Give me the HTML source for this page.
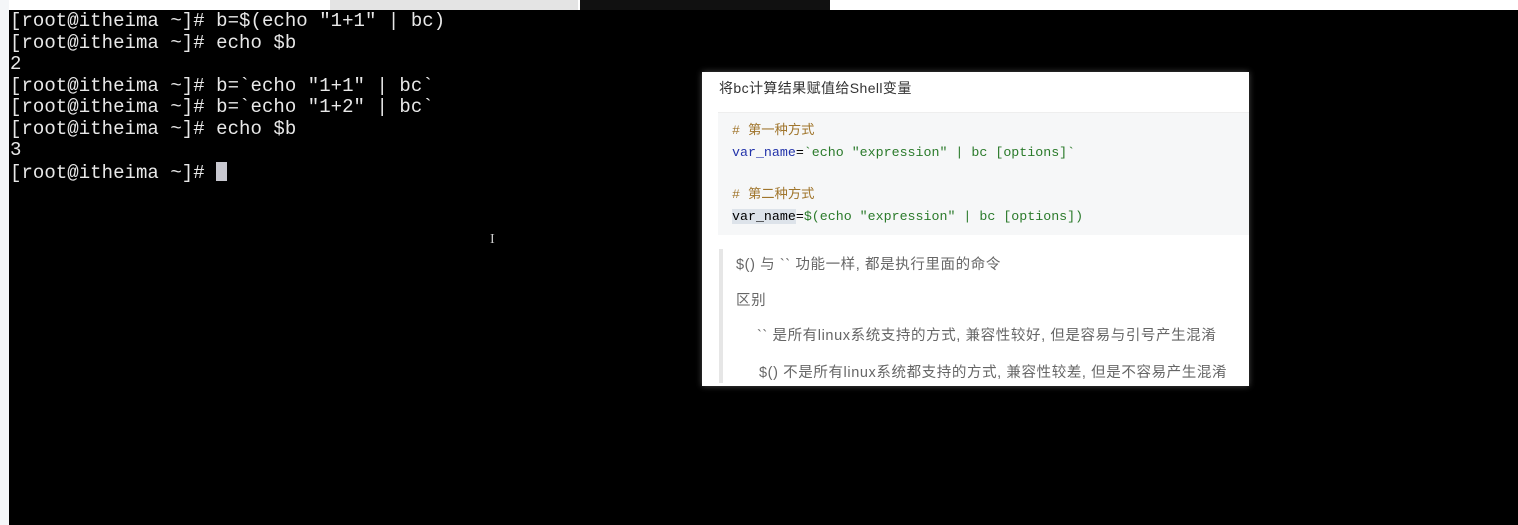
<!DOCTYPE html>
<html><head><meta charset="utf-8"><style>
body{margin:0;width:1518px;height:525px;background:#000;position:relative;overflow:hidden;font-family:"Liberation Sans","Noto Sans CJK SC",sans-serif}
.top{position:absolute;left:0;top:0;width:1518px;height:10px;background:#fff}
.tab1{position:absolute;left:330px;top:0;width:248px;height:10px;background:#e4e4e4}
.tab2{position:absolute;left:580px;top:0;width:250px;height:10px;background:#111}
.left{position:absolute;left:0;top:0;width:9px;height:525px;background:#f4f6f8}
.term{position:absolute;left:10px;top:11px;color:#e8e8e8;font:19px/21.5px "Liberation Mono",monospace;white-space:pre;letter-spacing:0.05px}
.cur{display:inline-block;width:11px;height:19px;background:#c8c8d0;vertical-align:-3px}
.panel{position:absolute;left:702px;top:72px;width:547px;height:314px;background:#fff;box-shadow:0 0 6px rgba(255,255,255,.3)}
.title{position:absolute;left:17px;top:6px;font-size:14px;color:#333;letter-spacing:0.4px}
.code{position:absolute;left:16px;top:40px;width:531px;height:122px;background:#f6f7f8;border-top:1px solid #eee;font:13.3px/21px "Liberation Mono",monospace;white-space:pre}
.code div{position:absolute;left:14px}
.c{color:#a0752c}.v{color:#2233aa}.s{color:#2a7a2a}
.bq{position:absolute;left:17px;top:177px;width:4px;height:134px;background:#e6e6e6}
.t{position:absolute;font-size:14.5px;color:#666;white-space:nowrap;letter-spacing:0.6px}
</style></head><body>
<div class="top"></div><div class="tab1"></div><div class="tab2"></div>
<div class="left"></div>
<div class="term">[root@itheima ~]# b=$(echo "1+1" | bc)
[root@itheima ~]# echo $b
2
[root@itheima ~]# b=`echo "1+1" | bc`
[root@itheima ~]# b=`echo "1+2" | bc`
[root@itheima ~]# echo $b
3
[root@itheima ~]# <span class="cur"></span></div>
<div style="position:absolute;left:490px;top:232px;color:#ccc;font:14px 'Liberation Serif',serif">I</div>
<div class="panel">
<div class="title">将bc计算结果赋值给Shell变量</div>
<div class="code">
<div class="c" style="top:7px"># 第一种方式</div>
<div style="top:29px"><span class="v">var_name</span>=<span class="s">`echo "expression" | bc [options]`</span></div>
<div class="c" style="top:71px"># 第二种方式</div>
<div style="top:93px"><span style="background:#dde3ea">var_name</span>=<span class="s">$(echo "expression" | bc [options])</span></div>
</div>
<div class="bq"></div>
<div class="t" style="left:34px;top:181px">$() 与 `` 功能一样, 都是执行里面的命令</div>
<div class="t" style="left:34px;top:217px">区别</div>
<div class="t" style="left:55px;top:252px">`` 是所有linux系统支持的方式, 兼容性较好, 但是容易与引号产生混淆</div>
<div class="t" style="left:57px;top:289px">$() 不是所有linux系统都支持的方式, 兼容性较差, 但是不容易产生混淆</div>
</div>
</body></html>
